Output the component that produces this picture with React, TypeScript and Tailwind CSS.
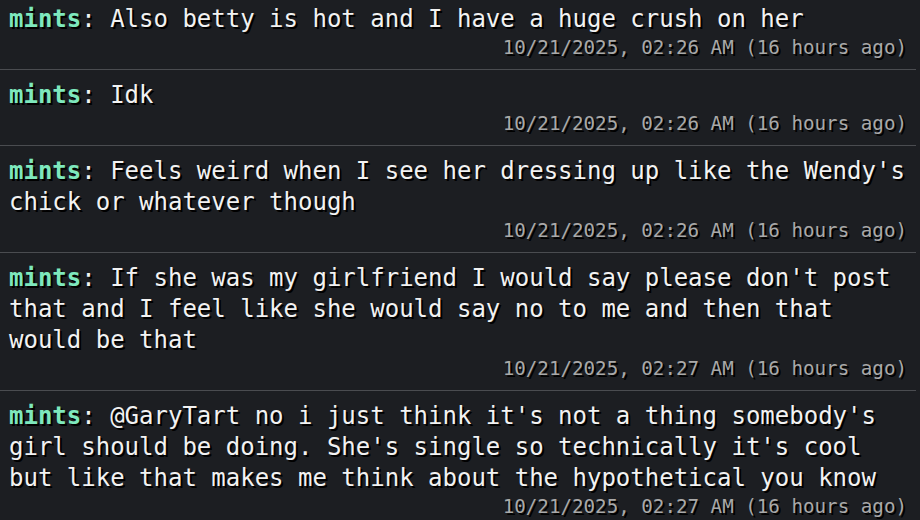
const messages = [
  {
    user: "mints",
    text: "Also betty is hot and I have a huge crush on her",
    time: "10/21/2025, 02:26 AM (16 hours ago)",
  },
  { user: "mints", text: "Idk", time: "10/21/2025, 02:26 AM (16 hours ago)" },
  {
    user: "mints",
    text: "Feels weird when I see her dressing up like the Wendy's chick or whatever though",
    time: "10/21/2025, 02:26 AM (16 hours ago)",
  },
  {
    user: "mints",
    text: "If she was my girlfriend I would say please don't post that and I feel like she would say no to me and then that would be that",
    time: "10/21/2025, 02:27 AM (16 hours ago)",
  },
  {
    user: "mints",
    text: "@GaryTart no i just think it's not a thing somebody's girl should be doing. She's single so technically it's cool but like that makes me think about the hypothetical you know",
    time: "10/21/2025, 02:27 AM (16 hours ago)",
  },
];

export default function App() {
  return (
    <div
      className="h-[520px] w-[920px] overflow-hidden bg-[#1c1e22] text-[#f2f2f2] [text-shadow:2px_2px_0_#000]"
      style={{ fontFamily: '"DejaVu Sans Mono", "Liberation Mono", monospace' }}
    >
      <div className="flex h-[529px] flex-col justify-end pr-[4px]">
        {messages.map((m, i) => (
          <div
            key={i}
            className="shrink-0 border-b border-[#4a4c50] px-[9px] pt-[10px] pb-[9px]"
          >
            <p className="text-[24px] leading-[31px] break-words">
              <span className="font-bold text-[#7ee8bd]">{m.user}</span>
              {": " + m.text}
            </p>
            <p className="text-right text-[19.2px] leading-[25px] text-[#a9a9a9]">
              {m.time}
            </p>
          </div>
        ))}
      </div>
    </div>
  );
}
